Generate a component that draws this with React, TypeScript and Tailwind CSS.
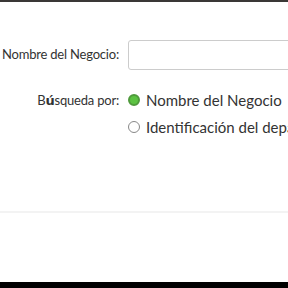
export default function App() {
  return (
    <div className="flex h-[288px] w-[288px] flex-col overflow-hidden bg-white" style={{ fontFamily: 'Lato, "Open Sans", sans-serif' }}>
      <div className="h-[2px] w-full shrink-0 bg-[#3a3836]" />
      <div className="flex min-h-0 flex-1 flex-col">
        <div className="mt-[38px] flex items-center">
          <label className="w-[128px] shrink-0 whitespace-nowrap pr-[9px] text-right text-[13px] tracking-[-0.2px] text-[#333]">Nombre del Negocio:</label>
          <div className="h-[30px] w-[200px] shrink-0 rounded-[3px] border border-[#ccc] bg-white" />
        </div>
        <div className="mt-[19px] flex">
          <div className="w-[128px] shrink-0 whitespace-nowrap pr-[9px] text-right text-[13px] leading-[22px] tracking-[-0.2px] text-[#333]">
            B<span className="font-bold" style={{ fontFamily: '"DejaVu Sans", sans-serif' }}>ú</span>squeda por:
          </div>
          <div className="flex flex-col gap-[5px] whitespace-nowrap text-[15px] leading-[22px] text-[#333]">
            <div className="flex items-center gap-[6px]">
              <span className="h-[12px] w-[12px] shrink-0 rounded-full border-[2px] border-[#4f9a3c] bg-[#5cc242]" />
              <span>Nombre del Negocio</span>
            </div>
            <div className="flex items-center gap-[6px]">
              <span className="h-[12px] w-[12px] shrink-0 rounded-full border border-[#888] bg-white" />
              <span>Identificación del departamento</span>
            </div>
          </div>
        </div>
        <div className="mt-auto mb-[69px] h-[2px] w-full shrink-0 bg-[#f3f3f3]" />
      </div>
      <div className="h-[6px] w-full shrink-0 bg-black" />
    </div>
  );
}
